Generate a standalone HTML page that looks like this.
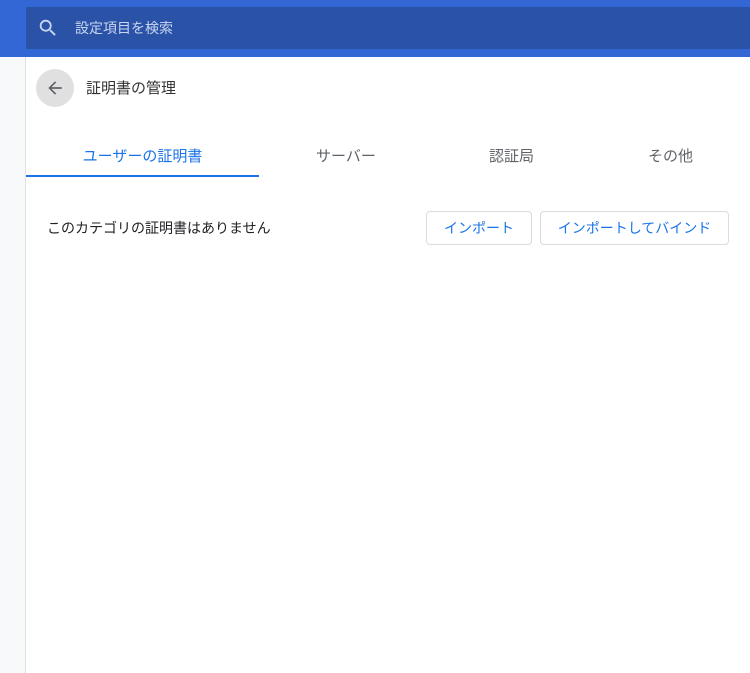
<!DOCTYPE html>
<html><head><meta charset="utf-8"><style>
body{margin:0;width:750px;height:673px;overflow:hidden;background:#f8f9fa;font-family:"Liberation Sans","Noto Sans CJK JP",sans-serif;position:relative}
.hdr{position:absolute;left:0;top:0;width:750px;height:57px;background:#3367d6}
.search{position:absolute;left:26px;top:7px;width:724px;height:42px;background:#2a52a7;border-radius:2px}
.search span{position:absolute;left:49px;top:11px;font-size:14px;color:#c9d6f1}
.card{position:absolute;left:25px;top:57px;width:725px;height:616px;background:#fff;border-left:1px solid #e0e0e0}
.back{position:absolute;left:10px;top:12px;width:38px;height:38px;border-radius:50%;background:#e0e0e0}
.title{position:absolute;left:60px;top:20px;font-size:15px;color:#333}
.tab{position:absolute;top:88px;font-size:15px;color:#5f6368;text-align:center}
.ind{position:absolute;left:0;top:118px;width:233px;height:2px;background:#1a73e8}
.msg{position:absolute;left:21px;top:161px;font-size:14px;color:#202124}
.btn{position:absolute;top:154px;height:34px;border:1px solid #dadce0;border-radius:4px;font-size:14px;color:#1a73e8;line-height:32px;text-align:center;box-sizing:border-box}
</style></head><body>
<div class="hdr"><div class="search">
<svg style="position:absolute;left:11px;top:10px" width="22" height="22" viewBox="0 0 24 24"><path fill="#c9d6f1" d="M15.5 14h-.79l-.28-.27A6.47 6.47 0 0016 9.5 6.5 6.5 0 109.5 16c1.61 0 3.090-.59 4.23-1.57l.27.28v.79l5 4.99L20.49 19l-4.99-5zm-6 0C7.01 14 5 11.99 5 9.5S7.01 5 9.5 5 14 7.01 14 9.5 11.99 14 9.5 14z"/></svg>
<span>設定項目を検索</span></div></div>
<div class="card">
<div class="back"><svg style="position:absolute;left:9px;top:9px" width="20" height="20" viewBox="0 0 24 24"><path fill="#5f6368" d="M20 11H7.83l5.59-5.59L12 4l-8 8 8 8 1.41-1.41L7.83 13H20v-2z"/></svg></div>
<div class="title">証明書の管理</div>
<div class="tab" style="left:0;width:233px;color:#1a73e8">ユーザーの証明書</div>
<div class="tab" style="left:290px">サーバー</div>
<div class="tab" style="left:463px">認証局</div>
<div class="tab" style="left:622px">その他</div>
<div class="ind"></div>
<div class="msg">このカテゴリの証明書はありません</div>
<div class="btn" style="left:400px;width:106px">インポート</div>
<div class="btn" style="left:514px;width:189px">インポートしてバインド</div>
</div>
</body></html>
